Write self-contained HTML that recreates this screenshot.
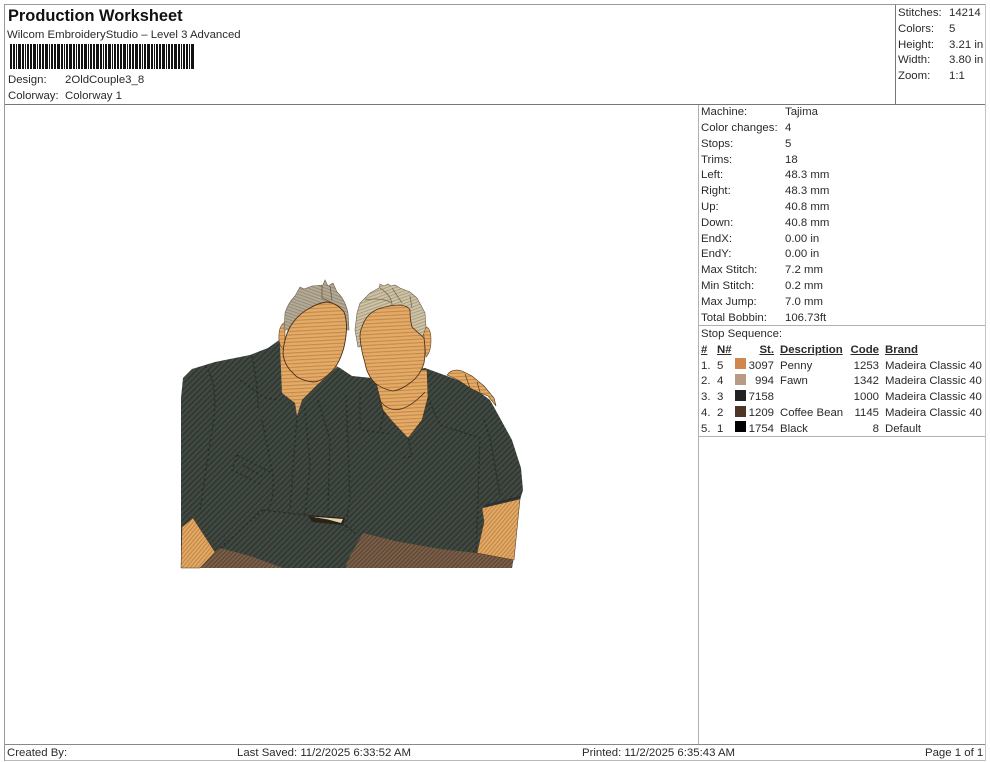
<!DOCTYPE html>
<html><head><meta charset="utf-8"><title>Production Worksheet</title>
<style>
html,body{margin:0;padding:0;background:#fff}
body{width:990px;height:762px;position:relative;overflow:hidden;font-family:"Liberation Sans",Arial,sans-serif;font-size:11.4px;color:#2a2a2a}
.t{position:absolute;white-space:nowrap;line-height:14px;height:14px;margin-top:1px}
.b{font-weight:bold}
.u{font-weight:bold;text-decoration:underline}
.r{text-align:right}
.l{position:absolute;background:#8a8a8a}
.s{position:absolute;width:11px;height:11px}
svg{position:absolute;left:0;top:0}
</style></head><body>
<div class="l" style="left:4px;top:4px;width:981px;height:1px;background:#999"></div>
<div class="l" style="left:4px;top:4px;width:1px;height:757px;background:#999"></div>
<div class="l" style="left:985px;top:4px;width:1px;height:757px;background:#c4c4c4"></div>
<div class="l" style="left:5px;top:104px;width:980px;height:1px;background:#777"></div>
<div class="l" style="left:895px;top:5px;width:1px;height:99px;background:#777"></div>
<div class="l" style="left:698px;top:105px;width:1px;height:639px;background:#b0b0b0"></div>
<div class="l" style="left:699px;top:325px;width:286px;height:1px;background:#b0b0b0"></div>
<div class="l" style="left:699px;top:436px;width:286px;height:1px;background:#b0b0b0"></div>
<div class="l" style="left:5px;top:744px;width:980px;height:1px;background:#888"></div>
<div class="l" style="left:5px;top:760px;width:980px;height:1px;background:#bbb"></div>

<div class="t b" style="left:8px;top:7px;font-size:16.4px;line-height:16px;height:16px;color:#111">Production Worksheet</div>
<div class="t" style="left:7px;top:27px">Wilcom EmbroideryStudio – Level 3 Advanced</div>
<svg width="990" height="762" viewBox="0 0 990 762">
<defs>
<pattern id="dk" width="4" height="4" patternUnits="userSpaceOnUse" patternTransform="rotate(-45)"><rect width="4" height="4" fill="#414a42"/><rect width="4" height="1.6" fill="#2f3630"/></pattern>
<pattern id="sk" width="4" height="3.6" patternUnits="userSpaceOnUse" patternTransform="rotate(-3)"><rect width="4" height="3.6" fill="#e5aa65"/><rect width="4" height="1.1" fill="#c08a4d"/></pattern>
<pattern id="sk2" width="4" height="3" patternUnits="userSpaceOnUse" patternTransform="rotate(-50)"><rect width="4" height="3" fill="#e5aa65"/><rect width="4" height="1.1" fill="#bd8748"/></pattern>
<pattern id="br" width="4" height="3" patternUnits="userSpaceOnUse" patternTransform="rotate(-45)"><rect width="4" height="3" fill="#7d6049"/><rect width="4" height="1.2" fill="#5a4534"/></pattern>
<pattern id="hl" width="3" height="3" patternUnits="userSpaceOnUse" patternTransform="rotate(20)"><rect width="3" height="3" fill="#b4aa95"/><rect width="3" height="1" fill="#958c78"/></pattern>
<pattern id="hr" width="3" height="3" patternUnits="userSpaceOnUse" patternTransform="rotate(-20)"><rect width="3" height="3" fill="#cfc3a6"/><rect width="3" height="1" fill="#a99e84"/></pattern>
</defs>

<line x1="10" y1="56.500" x2="195" y2="56.500" stroke="#111" stroke-width="25" stroke-dasharray="2 1 2 1 1 1 3 1 2 1 1 1 2 1 2 1 3 1 1 1 2 1 2 1 3 1 1 1 2 1 2 1 3 1 2 1 1 1 2 1 3 1 2 1 1 1 2 1 2 1 3 1 1 1 2 1 2 1 3 1 2 1 1 1 2 1 3 1 1 1 2 1 2 1 2 1 3 1 1 1 2 1 2 1 3 1 2 1 1 1 2 1 3 1 2 1 1 1 2 1 2 1 3 1 1 1 2 1 2 1 3 1 2 1 1 1"/>

<g style="filter:blur(.35px)">
<!-- body -->
<path d="M181,568 L181,398 L183,378 L192,369 L215,362 L250,355 L268,348 L282,338 L340,368 L352,376 L372,378 L425,368 L447,376 L470,385 L490,400 L500,418 L512,440 L521,468 L523,490 L520,500 L514,556 L512,568 Z" fill="url(#dk)"/>
<!-- table brown -->
<path d="M215,552 L220,548 L250,556 L283,568 L200,568 Z" fill="url(#br)"/>
<path d="M363,533 L395,541 L440,549 L477,553 L513,559 L512,568 L345,568 L350,556 Z" fill="url(#br)"/>
<!-- arms -->
<path d="M182,527 L193,518 L215,552 L200,568 L181,568 Z" fill="url(#sk2)" stroke="#4a3320" stroke-width=".5"/>
<path d="M482,508 L520,499 L514,560 L477,553 L484,522 Z" fill="url(#sk2)" stroke="#4a3320" stroke-width=".5"/>
<!-- cuff -->
<path d="M308,515 L345,518 L343,525 L312,522 Z" fill="#2a2117"/>
<path d="M310,516.500 L343,519 L341,523 L328,519.500 Z" fill="#e6d3ab"/>

<!-- seams -->
<g fill="none" stroke="#222923" stroke-width="1.3" stroke-dasharray="2.500 2.500" opacity=".8">
<path d="M205,366 Q220,385 212,430 Q206,470 200,510"/>
<path d="M252,356 Q258,385 258,408"/>
<path d="M262,420 L272,470 Q276,495 268,510"/>
<path d="M237,455 L270,472 M243,465 L265,478 M237,455 L232,470 L262,485"/>
<path d="M297,415 L293,470 L290,510"/>
<path d="M305,408 L310,465 L305,515"/>
<path d="M318,400 L330,440 L328,510"/>
<path d="M263,510 L305,515 L345,525 L355,533"/>
<path d="M263,510 L235,535 L220,548"/>
<path d="M360,392 L360,430 L392,434"/>
<path d="M384,412 L380,430"/>
<path d="M408,438 L412,456 L402,458"/>
<path d="M428,398 L440,425 L480,438 L478,500 L476,553"/>
<path d="M346,395 L350,500 L345,530"/>
<path d="M240,380 L265,398 L280,400"/>
<path d="M484,420 L490,438 L500,495"/>
</g>
<path d="M484,506 L520,497" stroke="#2a2f33" stroke-width="2" fill="none"/>

<!-- left neck + head -->
<path d="M285,345 L280,345 L282,393 L295,403 L297,416 L302,400 L317,385 L337,367 L320,350 Z" fill="url(#sk)"/>
<path d="M285,322 Q278,326 279,340 Q280,348 285,350 Z" fill="url(#sk)" stroke="#6a4526" stroke-width=".6"/>
<path d="M284,330 L285,313 Q288,303 295,296 L300,287 L304,289 L312,286 L323,285 L325,280 L328,286 L333,283 L337,292 Q345,299 348,313 L349,330 Z" fill="url(#hl)" stroke="#6a604c" stroke-width=".6"/>
<path d="M327,302 Q337,303 344,312 Q349,325 344,347 Q340,362 333,370 Q322,382 313,382 Q298,380 293,373 Q284,365 283,353 Q284,338 290,327 Q298,314 310,308 Q318,303 327,302 Z" fill="url(#sk)" stroke="#4a2e16" stroke-width=".9"/>
<path d="M322,285 L322,298 L335,304 M330,286 L332,300" fill="none" stroke="#6a5a44" stroke-width=".8"/>

<!-- right neck + head -->
<path d="M376,382 L383,410 L392,421 L408,438 L422,420 L428,397 L427,370 L410,370 Z" fill="url(#sk)" stroke="#4a2e16" stroke-width=".5"/>
<path d="M423,327 Q431,325 431,340 Q431,352 426,357 Z" fill="url(#sk)" stroke="#6a4526" stroke-width=".6"/>
<path d="M358,347 L355,330 L357,313 L360,303 L370,293 L379,288 L380,284 L384,286 L388,284 L391,286 L395,285 L400,288 L410,292 L417,298 L425,313 L426,327 L423,336 L410,345 L370,345 Z" fill="url(#hr)" stroke="#6a604c" stroke-width=".6"/>
<path d="M400,305 Q408,306 410,310 Q410,320 412,327 L424,338 Q426,352 424,363 Q420,376 410,383 Q401,390 393,391 Q382,389 375,383 Q367,375 365,363 Q361,350 360,337 Q360,331 362,327 Q366,314 378,309 Q390,305 400,305 Z" fill="url(#sk)" stroke="#4a2e16" stroke-width=".8"/>
<path d="M378,398 Q395,424 425,392" fill="none" stroke="#4a2e16" stroke-width=".8"/>
<path d="M380,288 Q392,296 392,305 M392,288 L402,303 M365,300 Q382,297 392,303 M410,296 L412,308" fill="none" stroke="#7a6f58" stroke-width=".8"/>
<!-- hand -->
<path d="M447,375 Q452,368 462,371 L472,376 L484,386 L494,398 L496,406 L488,396 L478,392 L470,388 L458,380 Z" fill="url(#sk)" stroke="#4a2e16" stroke-width=".6"/>
<path d="M465,374 L470,388 M477,382 L480,392" stroke="#4a2e16" stroke-width=".6" fill="none"/>
</g>
</svg>

<div class="t" style="left:8px;top:72px">Design:</div><div class="t" style="left:65px;top:72px">2OldCouple3_8</div>
<div class="t" style="left:8px;top:88px">Colorway:</div><div class="t" style="left:65px;top:88px">Colorway 1</div>

<div class="t" style="left:898px;top:5px">Stitches:</div><div class="t" style="left:949px;top:5px">14214</div>
<div class="t" style="left:898px;top:21px">Colors:</div><div class="t" style="left:949px;top:21px">5</div>
<div class="t" style="left:898px;top:37px">Height:</div><div class="t" style="left:949px;top:37px">3.21 in</div>
<div class="t" style="left:898px;top:52px">Width:</div><div class="t" style="left:949px;top:52px">3.80 in</div>
<div class="t" style="left:898px;top:68px">Zoom:</div><div class="t" style="left:949px;top:68px">1:1</div>

<div class="t" style="left:701px;top:104px">Machine:</div><div class="t" style="left:785px;top:104px">Tajima</div>
<div class="t" style="left:701px;top:120px">Color changes:</div><div class="t" style="left:785px;top:120px">4</div>
<div class="t" style="left:701px;top:136px">Stops:</div><div class="t" style="left:785px;top:136px">5</div>
<div class="t" style="left:701px;top:152px">Trims:</div><div class="t" style="left:785px;top:152px">18</div>
<div class="t" style="left:701px;top:167px">Left:</div><div class="t" style="left:785px;top:167px">48.3 mm</div>
<div class="t" style="left:701px;top:183px">Right:</div><div class="t" style="left:785px;top:183px">48.3 mm</div>
<div class="t" style="left:701px;top:199px">Up:</div><div class="t" style="left:785px;top:199px">40.8 mm</div>
<div class="t" style="left:701px;top:215px">Down:</div><div class="t" style="left:785px;top:215px">40.8 mm</div>
<div class="t" style="left:701px;top:231px">EndX:</div><div class="t" style="left:785px;top:231px">0.00 in</div>
<div class="t" style="left:701px;top:246px">EndY:</div><div class="t" style="left:785px;top:246px">0.00 in</div>
<div class="t" style="left:701px;top:262px">Max Stitch:</div><div class="t" style="left:785px;top:262px">7.2 mm</div>
<div class="t" style="left:701px;top:278px">Min Stitch:</div><div class="t" style="left:785px;top:278px">0.2 mm</div>
<div class="t" style="left:701px;top:294px">Max Jump:</div><div class="t" style="left:785px;top:294px">7.0 mm</div>
<div class="t" style="left:701px;top:310px">Total Bobbin:</div><div class="t" style="left:785px;top:310px">106.73ft</div>

<div class="t" style="left:701px;top:326px">Stop Sequence:</div>
<div class="t u" style="left:701px;top:342px">#</div><div class="t u" style="left:717px;top:342px">N#</div>
<div class="t u r" style="left:734px;width:40px;top:342px">St.</div><div class="t u" style="left:780px;top:342px">Description</div>
<div class="t u r" style="left:840px;width:39px;top:342px">Code</div><div class="t u" style="left:885px;top:342px">Brand</div>

<div class="t" style="left:701px;top:358px">1.</div><div class="t" style="left:717px;top:358px">5</div><div class="s" style="left:735px;top:358px;background:#d0874d"></div><div class="t r" style="left:734px;width:40px;top:358px">3097</div><div class="t" style="left:780px;top:358px">Penny</div><div class="t r" style="left:840px;width:39px;top:358px">1253</div><div class="t" style="left:885px;top:358px">Madeira Classic 40</div>
<div class="t" style="left:701px;top:373px">2.</div><div class="t" style="left:717px;top:373px">4</div><div class="s" style="left:735px;top:374px;background:#b89a85"></div><div class="t r" style="left:734px;width:40px;top:373px">994</div><div class="t" style="left:780px;top:373px">Fawn</div><div class="t r" style="left:840px;width:39px;top:373px">1342</div><div class="t" style="left:885px;top:373px">Madeira Classic 40</div>
<div class="t" style="left:701px;top:389px">3.</div><div class="t" style="left:717px;top:389px">3</div><div class="s" style="left:735px;top:390px;background:#222"></div><div class="t r" style="left:734px;width:40px;top:389px">7158</div><div class="t r" style="left:840px;width:39px;top:389px">1000</div><div class="t" style="left:885px;top:389px">Madeira Classic 40</div>
<div class="t" style="left:701px;top:405px">4.</div><div class="t" style="left:717px;top:405px">2</div><div class="s" style="left:735px;top:406px;background:#4f3526"></div><div class="t r" style="left:734px;width:40px;top:405px">1209</div><div class="t" style="left:780px;top:405px">Coffee Bean</div><div class="t r" style="left:840px;width:39px;top:405px">1145</div><div class="t" style="left:885px;top:405px">Madeira Classic 40</div>
<div class="t" style="left:701px;top:421px">5.</div><div class="t" style="left:717px;top:421px">1</div><div class="s" style="left:735px;top:421px;background:#000"></div><div class="t r" style="left:734px;width:40px;top:421px">1754</div><div class="t" style="left:780px;top:421px">Black</div><div class="t r" style="left:840px;width:39px;top:421px">8</div><div class="t" style="left:885px;top:421px">Default</div>

<div class="t" style="left:7px;top:745px">Created By:</div>
<div class="t" style="left:237px;top:745px">Last Saved: 11/2/2025 6:33:52 AM</div>
<div class="t" style="left:582px;top:745px">Printed: 11/2/2025 6:35:43 AM</div>
<div class="t" style="left:925px;top:745px">Page 1 of 1</div>
</body></html>
